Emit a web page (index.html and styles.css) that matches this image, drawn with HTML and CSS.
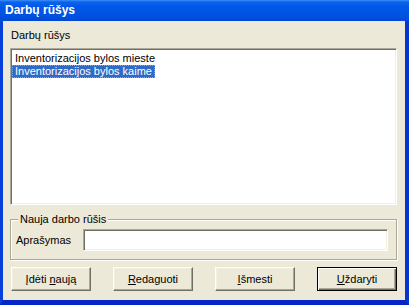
FILE: index.html
```html
<!DOCTYPE html>
<html lang="lt">
<head>
  <meta charset="UTF-8" />
  <title>Darbų rūšys</title>
  <link rel="stylesheet" href="styles.css">
</head>
<body>
  <div class="window">
    <div class="titlebar">Darbų rūšys</div>
    <div class="client">
      <div class="list-label">Darbų rūšys</div>
      <div class="listbox">
        <div class="item">Inventorizacijos bylos mieste</div>
        <div class="item selected">Inventorizacijos bylos kaime</div>
      </div>

      <fieldset class="group">
        <legend>Nauja darbo rūšis</legend>
        <div class="field-row">
          <label class="field-label">Aprašymas</label>
          <div class="edit"></div>
        </div>
      </fieldset>

      <div class="buttons">
        <div class="btn"><span><u>Į</u>dėti <u>n</u>aują</span></div>
        <div class="btn"><span><u>R</u>edaguoti</span></div>
        <div class="btn"><span><u>I</u>šmesti</span></div>
        <div class="btn default"><span><u>U</u>ždaryti</span></div>
      </div>
    </div>
  </div>
</body>
</html>
```

FILE: styles.css
```css
body {
  margin: 0;
  padding: 0;
  background: #fff;
}
.window {
  width: 409px;
  height: 305px;
  display: flex;
  flex-direction: column;
  background: #ece9d8;
  font-family: "Liberation Sans", Tahoma, sans-serif;
  font-size: 11px;
  color: #000;
  box-sizing: border-box;
}
.titlebar {
  height: 21px;
  line-height: 21px;
  padding-left: 5px;
  color: #fff;
  font-weight: bold;
  font-size: 12px;
  background: linear-gradient(#3d90f7 0, #0b62ea 2px, #0057e7 7px, #0054e3 14px, #0048d6 21px);
}
.client {
  flex: 1;
  display: flex;
  flex-direction: column;
  border-style: solid;
  border-color: #0840dc #0733cf #0526c4 #0840dc;
  border-width: 0 4px 5px 3px;
  padding: 8px 8px 0 7px;
}
.list-label {
  height: 13px;
  line-height: 13px;
  margin-left: 1px;
}
.listbox {
  margin-top: 6px;
  height: 157px;
  box-sizing: border-box;
  background: #fff;
  border: 1px solid;
  border-color: #aca899 #fff #fff #aca899;
  box-shadow: inset 1px 1px #716f64, inset -1px -1px #f1efe2;
  padding: 3px 1px 0 1px;
}
.item {
  width: fit-content;
  height: 13px;
  line-height: 13px;
  padding: 0 3px;
  box-sizing: border-box;
}
.item.selected {
  background: #316ac5;
  color: #fff;
  outline: 1px dotted #c9a04c;
  outline-offset: -1px;
}
.group {
  margin: 8px 0 0 0;
  padding: 3px 8px 8px 5px;
  border: 1px solid #aca899;
  box-shadow: inset 1px 1px #fff, 1px 1px #fff;
  min-width: 0;
}
.group legend {
  margin-left: 2px;
  padding: 0 2px;
  height: 13px;
  line-height: 13px;
  background: #ece9d8;
}
.field-row {
  display: flex;
  align-items: center;
}
.field-label {
  width: 67px;
}
.edit {
  flex: 1;
  height: 22px;
  box-sizing: border-box;
  background: #fff;
  border: 1px solid;
  border-color: #aca899 #fff #fff #aca899;
  box-shadow: inset 1px 1px #716f64, inset -1px -1px #f1efe2;
}
.buttons {
  margin: 7px 0 0 1px;
  display: flex;
  justify-content: space-between;
}
.btn {
  width: 80px;
  height: 24px;
  box-sizing: border-box;
  display: flex;
  align-items: center;
  justify-content: center;
  background: #ece9d8;
  border: 1px solid;
  border-color: #fff #716f64 #716f64 #fff;
  box-shadow: inset -1px -1px #aca899, inset 1px 1px #f1efe2;
}
.btn.default {
  border-color: #000;
  box-shadow: inset 1px 1px #fff, inset -1px -1px #716f64, inset -2px -2px #aca899;
}
```
